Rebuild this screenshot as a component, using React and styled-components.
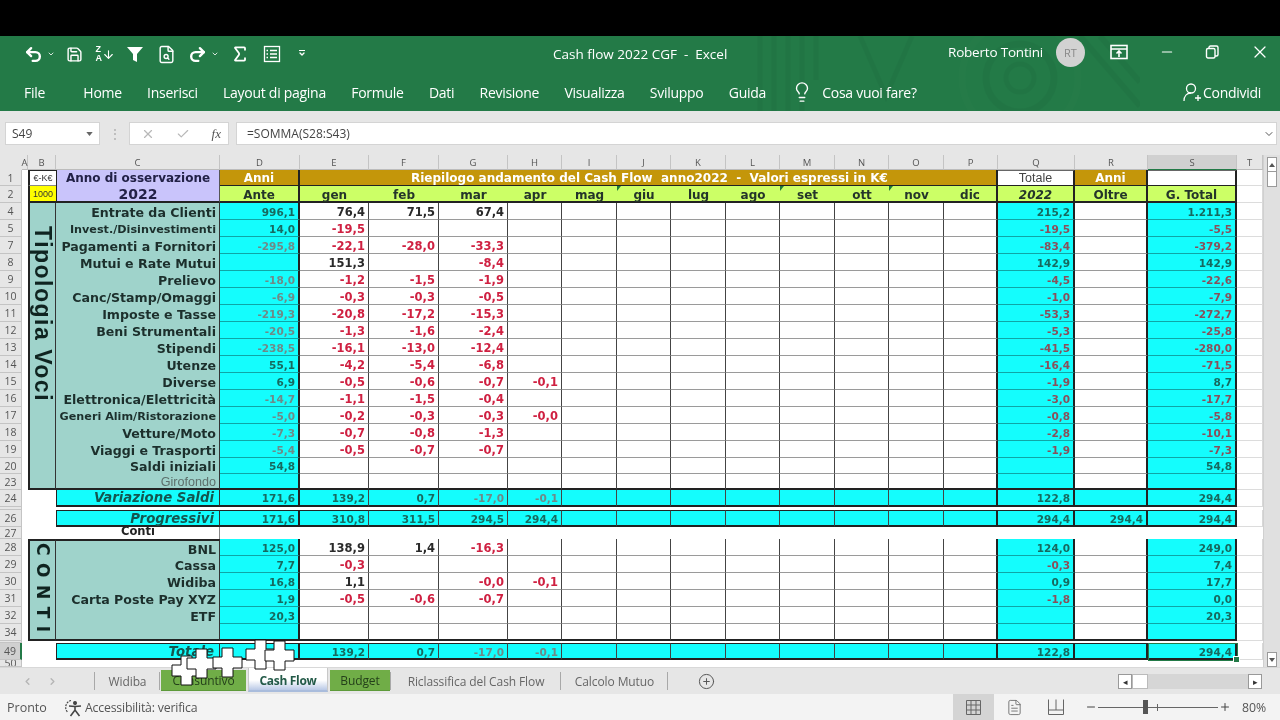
import React from 'react';
import styled, { createGlobalStyle } from 'styled-components';
import {
	ArrowDown,
	ChevronDown,
	ChevronLeft,
	ChevronRight,
	Check,
	CirclePlus,
	FileSearch,
	FileText,
	Lightbulb,
	Minus,
	Plus,
	Redo2,
	Save,
	Sigma,
	Undo2,
	X,
} from 'lucide-react';

const COLUMNS = ['A', 'B', 'C', 'D', 'E', 'F', 'G', 'H', 'I', 'J', 'K', 'L', 'M', 'N', 'O', 'P', 'Q', 'R', 'S', 'T'];
const MONTHS = ['gen', 'feb', 'mar', 'apr', 'mag', 'giu', 'lug', 'ago', 'set', 'ott', 'nov', 'dic'];
const MARKED = ['giu', 'set', 'nov'];

// vals: D, E, F, G, H, Q, S
const VOCI = [
	['4', 'Entrate da Clienti', ['996,1', '76,4', '71,5', '67,4', '', '215,2', '1.211,3']],
	['5', 'Invest./Disinvestimenti', ['14,0', '-19,5', '', '', '', '-19,5', '-5,5'], true],
	['7', 'Pagamenti a Fornitori', ['-295,8', '-22,1', '-28,0', '-33,3', '', '-83,4', '-379,2']],
	['8', 'Mutui e Rate Mutui', ['', '151,3', '', '-8,4', '', '142,9', '142,9']],
	['9', 'Prelievo', ['-18,0', '-1,2', '-1,5', '-1,9', '', '-4,5', '-22,6']],
	['10', 'Canc/Stamp/Omaggi', ['-6,9', '-0,3', '-0,3', '-0,5', '', '-1,0', '-7,9']],
	['11', 'Imposte e Tasse', ['-219,3', '-20,8', '-17,2', '-15,3', '', '-53,3', '-272,7']],
	['12', 'Beni Strumentali', ['-20,5', '-1,3', '-1,6', '-2,4', '', '-5,3', '-25,8']],
	['13', 'Stipendi', ['-238,5', '-16,1', '-13,0', '-12,4', '', '-41,5', '-280,0']],
	['14', 'Utenze', ['55,1', '-4,2', '-5,4', '-6,8', '', '-16,4', '-71,5']],
	['15', 'Diverse', ['6,9', '-0,5', '-0,6', '-0,7', '-0,1', '-1,9', '8,7']],
	['16', 'Elettronica/Elettricità', ['-14,7', '-1,1', '-1,5', '-0,4', '', '-3,0', '-17,7']],
	['17', 'Generi Alim/Ristorazione', ['-5,0', '-0,2', '-0,3', '-0,3', '-0,0', '-0,8', '-5,8'], true],
	['18', 'Vetture/Moto', ['-7,3', '-0,7', '-0,8', '-1,3', '', '-2,8', '-10,1']],
	['19', 'Viaggi e Trasporti', ['-5,4', '-0,5', '-0,7', '-0,7', '', '-1,9', '-7,3']],
	['20', 'Saldi iniziali', ['54,8', '', '', '', '', '', '54,8']],
];

const CONTI = [
	['28', 'BNL', ['125,0', '138,9', '1,4', '-16,3', '', '124,0', '249,0']],
	['29', 'Cassa', ['7,7', '-0,3', '', '', '', '-0,3', '7,4']],
	['30', 'Widiba', ['16,8', '1,1', '', '-0,0', '-0,1', '0,9', '17,7']],
	['31', 'Carta Poste Pay XYZ', ['1,9', '-0,5', '-0,6', '-0,7', '', '-1,8', '0,0']],
	['32', 'ETF', ['20,3', '', '', '', '', '', '20,3']],
	['34', '', ['', '', '', '', '', '', '']],
];

const CURSORS = [
	[170, 654],
	[185, 647],
	[211, 646],
	[244, 638],
	[263, 639],
];

const fillOf = (col) => (['D', 'Q', 'S'].includes(col) ? 'cyan' : 'white');
const lineOf = (col) => (['D', 'P', 'Q', 'R', 'S'].includes(col) ? 'thick' : 'thin');

const App = () => {
	// one row of amounts, from column D to column T
	const amounts = (vals, isBand, lastInBlock, capped) => {
		const [d, e, f, g, h, q, s, r] = vals;
		const byColumn = { D: d, E: e, F: f, G: g, H: h, Q: q, R: r, S: s };
		return COLUMNS.slice(3).map((col) => {
			if (col === 'T') return <Spare key={col} $band={isBand} />;
			const value = byColumn[col] || '';
			const negative = value.startsWith('-');
			return (
				<Amount
					key={col}
					$fill={isBand ? 'cyan' : fillOf(col)}
					$line={lineOf(col)}
					$negative={negative}
					$muted={col === 'D' || isBand}
					$big={!isBand && fillOf(col) === 'white'}
					$band={isBand}
					$capped={capped}
					$last={lastInBlock}
				>
					{value}
				</Amount>
			);
		});
	};

	const band = (row, label, vals, capped) => (
		<React.Fragment key={row}>
			<RowHead $selected={row === '49'}>{row}</RowHead>
			<Blank />
			<Blank />
			<BandLabel $capped={capped}>{label}</BandLabel>
			{amounts(vals, true, false, capped)}
		</React.Fragment>
	);

	return (
		<Page>
			<GlobalStyle />
			<BlackBar />
			<TitleBar>
				<Circuit viewBox="0 0 400 75" fill="none">
					<path d="M20 0v75M34 0v75M48 0v75M62 0v75M76 0v44M120 0l26 60 26-60" stroke="#1f6c40" strokeWidth="5" />
					<circle cx="280" cy="42" r="14" stroke="#1f6c40" strokeWidth="5" />
					<circle cx="280" cy="42" r="34" stroke="#1f6c40" strokeWidth="7" />
					<circle cx="280" cy="42" r="58" stroke="#2a7f4d" strokeWidth="7" />
					<path d="M340 0l60 70M360 0l40 46" stroke="#1f6c40" strokeWidth="6" />
				</Circuit>
				<QuickBar>
					<Undo2 size={19} strokeWidth={3} />
					<TinyChevron />
					<Save size={17} strokeWidth={2} />
					<SortIcon>
						<SortLetters>
							<span>Z</span>
							<span>A</span>
						</SortLetters>
						<ArrowDown size={13} strokeWidth={2} />
					</SortIcon>
					<Funnel viewBox="0 0 18 18">
						<path d="M1 2h16l-6 7v8l-4-2V9z" fill="#fff" />
					</Funnel>
					<FileSearch size={19} strokeWidth={1.8} />
					<Redo2 size={19} strokeWidth={3} />
					<TinyChevron />
					<Sigma size={20} strokeWidth={2.2} />
					<svg width="18" height="18" viewBox="0 0 18 18" fill="none" stroke="#fff" strokeWidth="1.3">
						<rect x="1.5" y="1.5" width="15" height="15" />
						<path d="M3.5 5.5h1.5M7 5.5h7M3.5 9h1.5M7 9h7M3.5 12.5h1.5M7 12.5h7" />
					</svg>
					<Customize>
						<Dash />
						<ChevronDown size={8} strokeWidth={4} />
					</Customize>
				</QuickBar>
				<DocTitle>Cash flow 2022 CGF&nbsp; -&nbsp; Excel</DocTitle>
				<UserArea>
					<UserName>Roberto Tontini</UserName>
					<Avatar>RT</Avatar>
					<WindowButtons>
						<svg width="18" height="16" viewBox="0 0 18 16" fill="none" stroke="#fff" strokeWidth="1.6">
							<rect x="1" y="1.5" width="16" height="13" />
							<path d="M1 5h16M9 13V7M6.5 9.5L9 7l2.5 2.5" />
						</svg>
						<Minus size={16} strokeWidth={1.6} />
						<svg width="14" height="14" viewBox="0 0 14 14" fill="none" stroke="#fff" strokeWidth="1.4">
							<rect x="1.5" y="3.5" width="8.5" height="9.5" rx="1.5" />
							<path d="M4 3.5V2.5A1.5 1.5 0 0 1 5.5 1h6A1.5 1.5 0 0 1 13 2.5v7A1.5 1.5 0 0 1 11.5 11H10" />
						</svg>
						<X size={20} strokeWidth={1.5} />
					</WindowButtons>
				</UserArea>
			</TitleBar>
			<MenuBar>
				<MenuFile>File</MenuFile>
				<MenuItem>Home</MenuItem>
				<MenuItem>Inserisci</MenuItem>
				<MenuItem>Layout di pagina</MenuItem>
				<MenuItem>Formule</MenuItem>
				<MenuItem>Dati</MenuItem>
				<MenuItem>Revisione</MenuItem>
				<MenuItem>Visualizza</MenuItem>
				<MenuItem>Sviluppo</MenuItem>
				<MenuItem>Guida</MenuItem>
				<TellMe>
					<Lightbulb size={22} strokeWidth={1.5} />
					Cosa vuoi fare?
				</TellMe>
				<Share>
					<svg width="20" height="20" viewBox="0 0 20 20" fill="none" stroke="#fff" strokeWidth="1.3">
						<circle cx="9" cy="6.5" r="4.5" />
						<path d="M2 19c0-5 3-8 7-8M13 16h6M16 13v6" />
					</svg>
					Condividi
				</Share>
			</MenuBar>
			<FormulaBar>
				<NameBox>
					S49
					<SmallArrow viewBox="0 0 8 5">
						<path d="M0 0h8L4 5z" fill="#666" />
					</SmallArrow>
				</NameBox>
				<Grip>⋮</Grip>
				<FormulaButtons>
					<X size={14} color="#b8b8b8" strokeWidth={2} />
					<Check size={14} color="#b8b8b8" strokeWidth={2} />
					<Fx>fx</Fx>
				</FormulaButtons>
				<FormulaInput>
					=SOMMA(S28:S43)
					<ChevronDown size={12} color="#555" />
				</FormulaInput>
			</FormulaBar>
			<SheetArea>
				<Sheet>
					<Corner />
					{COLUMNS.map((col) => (
						<ColHead key={col} $selected={col === 'S'}>
							{col}
						</ColHead>
					))}

					<RowHead>1</RowHead>
					<Blank />
					<SmallBox $fill="#fff">€-K€</SmallBox>
					<TitleCell $size={12}>Anno di osservazione</TitleCell>
					<GoldCell>Anni</GoldCell>
					<GoldCell $span={12} $indent={111}>
						Riepilogo andamento del Cash Flow&nbsp; anno2022&nbsp; -&nbsp; Valori espressi in K€
					</GoldCell>
					<TotalCell>Totale</TotalCell>
					<GoldCell>Anni</GoldCell>
					<TotalCell />
					<Spare />

					<RowHead>2</RowHead>
					<Blank />
					<SmallBox $fill="#ffff00" $last>
						1000
					</SmallBox>
					<TitleCell $size={14} $last>
						2022
					</TitleCell>
					<LimeCell>Ante</LimeCell>
					{MONTHS.map((m, i) => (
						<LimeCell key={m} $open={i < 11} $marked={MARKED.includes(m)}>
							{m}
						</LimeCell>
					))}
					<LimeCell $italic>2022</LimeCell>
					<LimeCell>Oltre</LimeCell>
					<LimeCell>G. Total</LimeCell>
					<Spare />

					{VOCI.map(([row, label, vals, small], i) => (
						<React.Fragment key={row}>
							<RowHead>{row}</RowHead>
							<Blank />
							{i === 0 && (
								<SideTitle $rows={17}>
									<TipologiaText>Tipologia Voci</TipologiaText>
								</SideTitle>
							)}
							<Label $small={small}>{label}</Label>
							{amounts(vals, false)}
						</React.Fragment>
					))}
					<RowHead>23</RowHead>
					<Blank />
					<Label $muted $last>
						Girofondo
					</Label>
					{amounts(['', '', '', '', '', '', ''], false, true)}

					{band('24', 'Variazione Saldi', ['171,6', '139,2', '0,7', '-17,0', '-0,1', '122,8', '294,4'])}

					<RowHead />
					<GapCell />

					{band('26', 'Progressivi', ['171,6', '310,8', '311,5', '294,5', '294,4', '294,4', '294,4', '294,4'], true)}

					<RowHead>27</RowHead>
					<Blank />
					<Blank />
					<ContiNote>Conti</ContiNote>
					<ContiGap />

					{CONTI.map(([row, label, vals], i) => (
						<React.Fragment key={row}>
							<RowHead>{row}</RowHead>
							<Blank />
							{i === 0 && (
								<SideTitle $rows={6} $closed>
									<ContiText>CONTI</ContiText>
								</SideTitle>
							)}
							<Label $top={i === 0} $last={i === 5}>
								{label}
							</Label>
							{amounts(vals, false, i === 5)}
						</React.Fragment>
					))}

					<RowHead />
					<GapCell />

					{band('49', 'Totale', ['', '139,2', '0,7', '-17,0', '-0,1', '122,8', '294,4'], true)}

					<RowHead>50</RowHead>
					<GapCell />

					<SelectedCell />
				</Sheet>
				<VScroll>
					<ScrollButton>
						<UpTriangle />
					</ScrollButton>
					<ScrollThumb />
					<ScrollFill />
					<ScrollButton>
						<DownTriangle />
					</ScrollButton>
				</VScroll>
				{CURSORS.map(([x, y]) => (
					<Cursor key={`${x}-${y}`} viewBox="0 0 32 32" $x={x} $y={y - 155}>
						<path d="M11 2h11v9h9v11h-9v9H11v-9H2V11h9z" fill="#fff" stroke="#111" strokeWidth="1" />
					</Cursor>
				))}
			</SheetArea>
			<TabBar>
				<TabNav>
					<ChevronLeft size={11} color="#b5b5b5" strokeWidth={3} />
					<ChevronRight size={11} color="#b5b5b5" strokeWidth={3} />
				</TabNav>
				<TabDivider />
				<Tab $width={63}>Widiba</Tab>
				<TabDivider />
				<Tab $width={85} $green>
					Consuntivo
				</Tab>
				<ActiveTab>Cash Flow</ActiveTab>
				<Tab $width={60} $green>
					Budget
				</Tab>
				<TabDivider />
				<Tab $width={168}>Riclassifica del Cash Flow</Tab>
				<TabDivider />
				<Tab $width={105}>Calcolo Mutuo</Tab>
				<TabDivider />
				<AddSheet>
					<CirclePlus size={17} color="#555" strokeWidth={1.4} />
				</AddSheet>
				<HScroll>
					<HScrollButton>◂</HScrollButton>
					<HScrollThumb />
					<HScrollFill />
					<HScrollButton>▸</HScrollButton>
				</HScroll>
			</TabBar>
			<StatusBar>
				<StatusText>Pronto</StatusText>
				<AccessCheck>
					<svg width="19" height="19" viewBox="0 0 19 19" fill="none" stroke="#444" strokeWidth="1.2">
						<path d="M7 2.5A7 7 0 0 0 3.5 14" strokeDasharray="2 1" />
						<circle cx="11" cy="5" r="1.4" fill="#444" />
						<path d="M5 8l6 .5 6-.5M11 8.5V12M6.5 18l4.5-6 4.5 6" strokeWidth="1.6" />
					</svg>
					Accessibilità: verifica
				</AccessCheck>
				<ViewSwitch>
					<ViewButton $active>
						<svg width="15" height="15" viewBox="0 0 15 15" fill="none" stroke="#666" strokeWidth="1">
							<path d="M.5.5h14v14H.5zM.5 5h14M.5 10h14M5 .5v14M10 .5v14" />
						</svg>
					</ViewButton>
					<ViewButton>
						<FileText size={17} color="#666" strokeWidth={1.2} />
					</ViewButton>
					<ViewButton>
						<svg width="16" height="16" viewBox="0 0 16 16" fill="none" stroke="#666" strokeWidth="1">
							<path d="M.5.5v15h15V.5M.5 11h15M8 .5V11" />
						</svg>
					</ViewButton>
				</ViewSwitch>
				<ZoomControl>
					<Minus size={12} color="#444" />
					<ZoomTrack>
						<ZoomTick />
						<ZoomThumb />
					</ZoomTrack>
					<Plus size={12} color="#444" />
				</ZoomControl>
				<ZoomValue>80%</ZoomValue>
			</StatusBar>
		</Page>
	);
};

const GlobalStyle = createGlobalStyle`
	html, body {
		margin: 0;
		padding: 0;
		background: #000;
	}
	* {
		box-sizing: border-box;
	}
`;

const Page = styled.div`
	width: 1280px;
	height: 720px;
	display: flex;
	flex-direction: column;
	overflow: hidden;
	background: #fff;
	font-family: 'Open Sans', 'Noto Sans', sans-serif;
	filter: blur(0.35px);
`;

const BlackBar = styled.div`
	height: 36px;
	flex: none;
	background: #000;
`;

const TitleBar = styled.div`
	position: relative;
	height: 42px;
	flex: none;
	padding-bottom: 6px;
	display: flex;
	align-items: center;
	background: #237a47;
	color: #fff;
`;

const Circuit = styled.svg`
	position: absolute;
	left: 740px;
	top: 0;
	width: 400px;
	height: 75px;
	opacity: 0.3;
`;

const QuickBar = styled.div`
	position: relative;
	width: 530px;
	padding-left: 24px;
	display: flex;
	align-items: center;
	gap: 12.5px;
	svg {
		flex: none;
	}
`;

const TinyChevron = styled(ChevronDown).attrs({ size: 8, strokeWidth: 3 })`
	margin-left: -9px;
	margin-right: -1px;
	opacity: 0.8;
`;

const SortIcon = styled.div`
	width: 18px;
	display: flex;
	align-items: center;
`;

const SortLetters = styled.div`
	display: flex;
	flex-direction: column;
	font-family: 'Liberation Sans', sans-serif;
	font-size: 9px;
	font-weight: 700;
	line-height: 9px;
`;

const Funnel = styled.svg`
	width: 18px;
	height: 18px;
`;

const Customize = styled.div`
	margin-left: 5px;
	display: flex;
	flex-direction: column;
	align-items: center;
`;

const Dash = styled.div`
	width: 6px;
	height: 1px;
	background: #fff;
	margin-bottom: -1px;
`;

const DocTitle = styled.div`
	position: relative;
	margin-left: 23px;
	font-size: 13.5px;
	white-space: nowrap;
`;

const UserArea = styled.div`
	position: relative;
	margin-left: auto;
	display: flex;
	align-items: center;
	padding-right: 10px;
	margin-top: -4px;
`;

const UserName = styled.div`
	font-size: 13.5px;
	letter-spacing: -0.2px;
`;

const Avatar = styled.div`
	width: 29px;
	height: 29px;
	margin-left: 13px;
	border-radius: 50%;
	background: #d2d2d2;
	color: #888;
	font-size: 11px;
	display: flex;
	align-items: center;
	justify-content: center;
`;

const WindowButtons = styled.div`
	width: 160px;
	margin-left: 25px;
	display: flex;
	align-items: center;
	justify-content: space-between;
`;

const MenuBar = styled.div`
	position: relative;
	height: 33px;
	flex: none;
	padding: 0 19px 5px 24px;
	display: flex;
	align-items: center;
	gap: 25.3px;
	color: #fff;
	font-size: 14px;
	letter-spacing: -0.28px;
	&::before {
		content: '';
		position: absolute;
		inset: 0;
		z-index: -1;
		background: #237a47;
	}
`;

const MenuItem = styled.div`
	white-space: nowrap;
`;

const MenuFile = styled(MenuItem)`
	margin-right: 13px;
`;

const TellMe = styled.div`
	display: flex;
	align-items: center;
	gap: 9px;
	white-space: nowrap;
`;

const Share = styled.div`
	margin-left: auto;
	display: flex;
	align-items: center;
	gap: 1px;
	white-space: nowrap;
`;

const FormulaBar = styled.div`
	height: 44px;
	flex: none;
	padding: 11px 3px 10px 5px;
	display: flex;
	align-items: stretch;
	background: #e6e6e6;
	font-size: 12px;
	color: #444;
`;

const NameBox = styled.div`
	width: 95px;
	padding: 0 6px;
	display: flex;
	align-items: center;
	justify-content: space-between;
	background: #fff;
	border: 1px solid #d4d4d4;
`;

const SmallArrow = styled.svg`
	width: 7px;
	height: 4px;
`;

const Grip = styled.div`
	width: 29px;
	display: flex;
	align-items: center;
	justify-content: center;
	color: #aaa;
`;

const FormulaButtons = styled.div`
	width: 100px;
	margin-right: 7px;
	padding: 0 7px 0 11px;
	display: flex;
	align-items: center;
	justify-content: space-between;
	background: #fff;
	border: 1px solid #d4d4d4;
`;

const Fx = styled.span`
	font-family: 'Liberation Serif', serif;
	font-style: italic;
	font-size: 13px;
	color: #555;
`;

const FormulaInput = styled.div`
	flex: 1;
	padding: 0 1px 0 10px;
	display: flex;
	align-items: center;
	justify-content: space-between;
	background: #fff;
	border: 1px solid #d4d4d4;
`;

const SheetArea = styled.div`
	position: relative;
	height: 512px;
	flex: none;
	display: flex;
	background: #fff;
`;

const Sheet = styled.div`
	position: relative;
	width: 1263px;
	display: grid;
	align-content: start;
	grid-template-columns: 22px 6px 28px 164px 80px 69px 70px 69px 54px 55px 54px 55px 54px 55px 54px 55px 54px 77px 73px 89px 26px;
	grid-template-rows:
		15px 16px 17px repeat(15, 17px) 16px 16px 17px 3px 17px 12px repeat(6, 17px) 2px 17px 7px;
	font-family: 'DejaVu Sans', 'Liberation Sans', sans-serif;
`;

const Corner = styled.div`
	background: #e6e6e6;
`;

const ColHead = styled.div`
	display: flex;
	align-items: center;
	justify-content: center;
	font-family: 'Open Sans', sans-serif;
	font-size: 9.5px;
	color: #555;
	background: ${(props) => (props.$selected ? '#d0d0d0' : '#e6e6e6')};
	border-right: 1px solid #c4c4c4;
	border-bottom: 1px solid ${(props) => (props.$selected ? '#237a47' : '#bcbcbc')};
`;

const RowHead = styled.div`
	display: flex;
	align-items: center;
	justify-content: center;
	overflow: hidden;
	font-family: 'Open Sans', sans-serif;
	font-size: 10.5px;
	color: #555;
	background: ${(props) => (props.$selected ? '#d0d0d0' : '#e6e6e6')};
	border-right: ${(props) => (props.$selected ? '2px solid #237a47' : '1px solid #c4c4c4')};
	border-bottom: 1px solid #c4c4c4;
`;

const Blank = styled.div`
	background: #fff;
`;

const GapCell = styled.div`
	grid-column: span 20;
	background: #fff;
`;

const SmallBox = styled.div`
	display: flex;
	align-items: center;
	justify-content: center;
	font-family: 'Liberation Sans', sans-serif;
	font-size: 9px;
	color: #333;
	background: ${(props) => props.$fill};
	border-left: 2px solid #222;
	border-top: ${(props) => (props.$last ? '0' : '1px solid #222')};
	border-bottom: ${(props) => (props.$last ? '2px solid #222' : '1px solid #888')};
`;

const TitleCell = styled.div`
	display: flex;
	align-items: center;
	justify-content: center;
	font-size: ${(props) => props.$size}px;
	font-weight: 700;
	color: #222146;
	background: #c9c4fb;
	border-left: 1px solid #222;
	border-right: 1px solid #555;
	border-bottom: ${(props) => (props.$last ? '2px solid #222' : '0')};
`;

const GoldCell = styled.div`
	grid-column: span ${(props) => props.$span || 1};
	display: flex;
	align-items: center;
	justify-content: ${(props) => (props.$indent ? 'flex-start' : 'center')};
	padding-left: ${(props) => props.$indent || 0}px;
	font-size: 12px;
	font-weight: 700;
	white-space: nowrap;
	color: #fff;
	background: #c4960a;
	border-right: 2px solid #222;
	border-bottom: 1px solid #222;
`;

const TotalCell = styled.div`
	display: flex;
	align-items: center;
	justify-content: center;
	font-family: 'Liberation Sans', sans-serif;
	font-size: 12.5px;
	color: #444;
	background: #fff;
	border-right: 2px solid #222;
	border-top: 1px solid #666;
	border-bottom: 1px solid #222;
`;

const LimeCell = styled.div`
	position: relative;
	padding-top: 2px;
	display: flex;
	align-items: center;
	justify-content: center;
	font-size: 12px;
	font-weight: 700;
	font-style: ${(props) => (props.$italic ? 'italic' : 'normal')};
	color: #24352a;
	background: #ccff66;
	border-right: ${(props) => (props.$open ? '0' : '2px solid #222')};
	border-bottom: 2px solid #222;
	${(props) =>
		props.$marked &&
		`&::before {
			content: '';
			position: absolute;
			top: 0;
			left: 0;
			border-top: 5px solid #1d7a3a;
			border-right: 4px solid transparent;
		}`}
`;

const SideTitle = styled.div`
	grid-row: span ${(props) => props.$rows};
	display: flex;
	align-items: flex-start;
	justify-content: center;
	padding-top: ${(props) => (props.$closed ? '2px' : '23px')};
	background: #9fd3cb;
	border-left: 2px solid #222;
	border-right: 1px solid #333;
	border-top: ${(props) => (props.$closed ? '2px solid #222' : '0')};
	border-bottom: 2px solid #222;
`;

const TipologiaText = styled.span`
	writing-mode: vertical-rl;
	white-space: nowrap;
	font-family: 'Liberation Sans', sans-serif;
	font-size: 23px;
	font-weight: 700;
	letter-spacing: 1.5px;
	color: #0f2420;
`;

const ContiText = styled(TipologiaText)`
	font-family: 'DejaVu Sans', sans-serif;
	font-size: 17px;
	letter-spacing: 7.5px;
`;

const Label = styled.div`
	padding: 1px 3px 0 0;
	display: flex;
	align-items: center;
	justify-content: flex-end;
	overflow: hidden;
	white-space: nowrap;
	font-size: ${(props) => (props.$small ? '11.2px' : '12.6px')};
	font-weight: ${(props) => (props.$muted ? 400 : 700)};
	font-family: ${(props) => (props.$muted ? "'Liberation Sans', sans-serif" : 'inherit')};
	color: ${(props) => (props.$muted ? '#5d706c' : '#1c2f2c')};
	background: #9fd3cb;
	border-right: 1px solid #333;
	border-top: ${(props) => (props.$top ? '2px solid #222' : '0')};
	border-bottom: ${(props) => (props.$last ? '2px solid #222' : '0')};
`;

const BandLabel = styled.div`
	display: flex;
	align-items: center;
	justify-content: flex-end;
	padding-right: 5px;
	white-space: nowrap;
	font-size: 13.3px;
	font-weight: 700;
	font-style: italic;
	color: #14564f;
	background: #14fdfd;
	border-left: 1px solid #222;
	border-right: 1px solid #333;
	border-top: ${(props) => (props.$capped ? '1px solid #222' : '0')};
	border-bottom: 2px solid #222;
`;

const Amount = styled.div`
	padding: 1px 3px 0 0;
	display: flex;
	align-items: center;
	justify-content: flex-end;
	overflow: hidden;
	white-space: nowrap;
	font-size: ${(props) => (props.$big ? '11.5px' : '10.5px')};
	font-weight: 700;
	background: ${(props) => (props.$fill === 'cyan' ? '#14fdfd' : '#fff')};
	color: ${(props) => {
		if (props.$fill === 'cyan') {
			if (!props.$negative) return '#17695f';
			return props.$muted ? '#6f8a88' : '#8a4f5a';
		}
		return props.$negative ? '#cf2041' : '#2a2a2a';
	}};
	border-right: ${(props) => (props.$line === 'thick' ? '2px solid #222' : '1px solid #444')};
	border-top: ${(props) => (props.$capped ? '1px solid #222' : '0')};
	border-bottom: ${(props) => {
		if (props.$band || props.$last) return '2px solid #222';
		return props.$fill === 'cyan' ? '1px solid #0fa5a5' : '1px solid #9a9a9a';
	}};
`;

const Spare = styled.div`
	border-right: 1px solid #d8d8d8;
	border-bottom: 1px solid #dcdcdc;
`;

const ContiNote = styled.div`
	display: flex;
	align-items: flex-start;
	justify-content: flex-start;
	padding-left: 65px;
	line-height: 9px;
	font-size: 11.5px;
	font-weight: 700;
	color: #222;
	background: #fff;
	border-right: 1px solid #888;
	overflow: hidden;
`;

const ContiGap = styled.div`
	grid-column: span 17;
	background: #fff;
`;

const SelectedCell = styled.div`
	position: absolute;
	left: 1148px;
	top: 488px;
	width: 90px;
	height: 18px;
	border: 1px solid #237a47;
	&::after {
		content: '';
		position: absolute;
		right: -3px;
		bottom: -3px;
		width: 5px;
		height: 5px;
		background: #237a47;
		border: 1px solid #fff;
	}
`;

const VScroll = styled.div`
	width: 17px;
	padding: 2px 3px 0;
	display: flex;
	flex-direction: column;
	background: #e0e0e0;
	border-left: 1px solid #d0d0d0;
`;

const ScrollButton = styled.div`
	height: 15px;
	display: flex;
	align-items: center;
	justify-content: center;
	background: #fff;
	border: 1px solid #9a9a9a;
`;

const UpTriangle = styled.div`
	border-left: 3px solid transparent;
	border-right: 3px solid transparent;
	border-bottom: 4px solid #555;
`;

const DownTriangle = styled.div`
	border-left: 3px solid transparent;
	border-right: 3px solid transparent;
	border-top: 4px solid #555;
`;

const ScrollThumb = styled.div`
	height: 15px;
	background: #fff;
	border: 1px solid #9a9a9a;
	border-top: 0;
`;

const ScrollFill = styled.div`
	flex: 1;
`;

const Cursor = styled.svg`
	position: absolute;
	z-index: 2;
	left: ${(props) => props.$x}px;
	top: ${(props) => props.$y}px;
	width: 32px;
	height: 32px;
`;

const TabBar = styled.div`
	height: 27px;
	flex: none;
	display: flex;
	align-items: center;
	background: #e6e6e6;
	border-top: 1px solid #d8d8d8;
	font-family: 'Open Sans', sans-serif;
	font-size: 12px;
	letter-spacing: -0.1px;
	color: #666;
`;

const TabNav = styled.div`
	width: 94px;
	padding: 0 36px 0 22px;
	display: flex;
	justify-content: space-between;
`;

const TabDivider = styled.div`
	width: 1px;
	height: 18px;
	margin-right: 1px;
	background: #a8a8a8;
`;

const Tab = styled.div`
	width: ${(props) => props.$width}px;
	height: ${(props) => (props.$green ? '21px' : '100%')};
	margin-top: ${(props) => (props.$green ? '-1px' : '0')};
	display: flex;
	align-items: center;
	justify-content: center;
	white-space: nowrap;
	background: ${(props) => (props.$green ? '#70ad47' : 'transparent')};
	color: ${(props) => (props.$green ? '#24401a' : '#666')};
	border-bottom: ${(props) => (props.$green ? '1px solid #5d9a3a' : '0')};
`;

const ActiveTab = styled.div`
	width: 80px;
	height: 24px;
	margin: -3px 2px 0;
	padding-top: 3px;
	display: flex;
	align-items: center;
	justify-content: center;
	white-space: nowrap;
	font-weight: 700;
	letter-spacing: -0.3px;
	color: #235a48;
	background: linear-gradient(#fff 55%, #b9c9e6);
	border: 1px solid #c8c8c8;
	border-top: 0;
	border-bottom: 2px solid #a9bcdc;
`;

const AddSheet = styled.div`
	margin-left: 29px;
	display: flex;
`;

const HScroll = styled.div`
	margin-left: auto;
	margin-right: 18px;
	width: 144px;
	height: 15px;
	display: flex;
	background: #d6d6d6;
`;

const HScrollButton = styled.div`
	width: 14px;
	display: flex;
	align-items: center;
	justify-content: center;
	font-size: 9px;
	line-height: 1;
	color: #333;
	background: #fff;
	border: 1px solid #999;
`;

const HScrollThumb = styled.div`
	width: 16px;
	background: #fff;
	border: 1px solid #bbb;
`;

const HScrollFill = styled.div`
	flex: 1;
`;

const StatusBar = styled.div`
	height: 26px;
	flex: none;
	display: flex;
	align-items: center;
	background: #f3f3f3;
	font-family: 'Open Sans', sans-serif;
	font-size: 12.3px;
	color: #555;
`;

const StatusText = styled.div`
	width: 64px;
	padding-left: 7px;
	font-size: 12.5px;
`;

const AccessCheck = styled.div`
	display: flex;
	align-items: center;
	gap: 2px;
	letter-spacing: -0.2px;
	white-space: nowrap;
`;

const ViewSwitch = styled.div`
	margin-left: auto;
	display: flex;
	align-items: center;
	height: 100%;
`;

const ViewButton = styled.div`
	width: 41px;
	height: 100%;
	display: flex;
	align-items: center;
	justify-content: center;
	background: ${(props) => (props.$active ? '#d4d4d4' : 'transparent')};
`;

const ZoomControl = styled.div`
	width: 146px;
	margin-left: 9px;
	display: flex;
	align-items: center;
	justify-content: space-between;
`;

const ZoomTrack = styled.div`
	position: relative;
	width: 120px;
	height: 1px;
	background: #666;
`;

const ZoomTick = styled.div`
	position: absolute;
	left: 59px;
	top: -3px;
	width: 1px;
	height: 7px;
	background: #666;
`;

const ZoomThumb = styled.div`
	position: absolute;
	left: 45px;
	top: -7px;
	width: 5px;
	height: 14px;
	background: #555;
`;

const ZoomValue = styled.div`
	width: 49px;
	padding-left: 11px;
	white-space: nowrap;
`;

export default App;
